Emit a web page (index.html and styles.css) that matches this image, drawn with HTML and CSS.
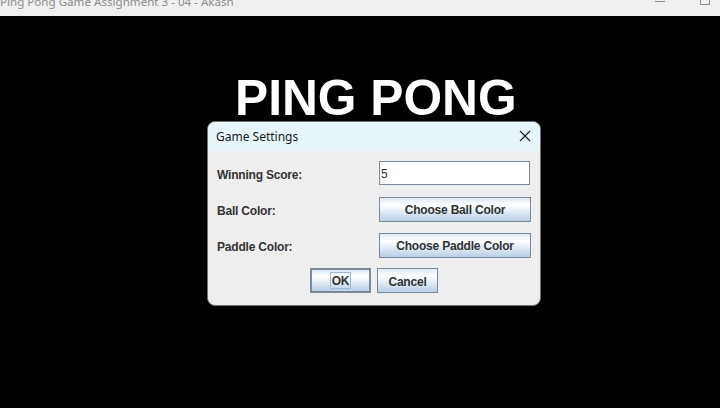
FILE: index.html
```html
<!DOCTYPE html>
<html>
<head>
<meta charset="utf-8">
<title>Ping Pong</title>
<link rel="stylesheet" href="styles.css">
</head>
<body>
<div class="titlebar">
  <span class="wintitle">Ping Pong Game Assignment 3 - 04 - Akash</span>
  <span class="ctl-min"></span>
  <span class="ctl-max"></span>
</div>
<main class="canvas">
  <h1 class="logo">PING PONG</h1>
  <section class="dialog">
    <header class="dlg-head">
      <span class="dlg-title">Game Settings</span>
      <svg class="dlg-close" width="12" height="12" viewBox="0 0 12 12"><path d="M1 1 L11 11 M11 1 L1 11" stroke="#1a1a1a" stroke-width="1.1" fill="none"/></svg>
    </header>
    <div class="dlg-body">
      <div class="form">
        <label class="lbl">Winning Score:</label>
        <div class="field">5</div>
        <label class="lbl">Ball Color:</label>
        <button class="btn">Choose Ball Color</button>
        <label class="lbl">Paddle Color:</label>
        <button class="btn">Choose Paddle Color</button>
      </div>
      <div class="actions">
        <button class="btn btn-small btn-default"><span class="focus">OK</span></button>
        <button class="btn btn-small">Cancel</button>
      </div>
    </div>
  </section>
</main>
</body>
</html>
```

FILE: styles.css
```css
html, body {
  margin: 0;
  padding: 0;
  width: 720px;
  height: 408px;
  overflow: hidden;
  background: #000;
}

.titlebar {
  height: 16px;
  background: #f0f0f0;
  display: flex;
  align-items: flex-start;
  overflow: hidden;
}

.wintitle {
  font-family: "Noto Sans", "Open Sans", sans-serif;
  font-size: 11.6px;
  line-height: 16px;
  color: #8c8c8c;
  margin-top: -6px;
  white-space: nowrap;
  flex: 1;
}

.ctl-min {
  width: 10px;
  height: 1px;
  background: #8a8a8a;
  margin-top: 1px;
}

.ctl-max {
  width: 8px;
  height: 8px;
  border: 1px solid #8a8a8a;
  margin-top: -5px;
  margin-left: 35px;
  margin-right: 10px;
}

.canvas {
  position: relative;
  height: 392px;
  background: #000;
}

.logo {
  margin: 0;
  padding: 57px 0 0 235px;
  font-family: "Liberation Sans", Arial, sans-serif;
  font-weight: bold;
  font-size: 49.7px;
  line-height: 50px;
  color: #fff;
}

.dialog {
  position: absolute;
  left: 207px;
  top: 105px;
  width: 334px;
  height: 185px;
  box-sizing: border-box;
  border: 1px solid #707070;
  border-radius: 8px;
  overflow: hidden;
  background: #eeeeee;
  display: flex;
  flex-direction: column;
}

.dlg-head {
  height: 29px;
  background: #e6f5f8;
  display: flex;
  align-items: center;
  padding-left: 8px;
  padding-right: 9px;
}

.dlg-title {
  flex: 1;
  font-family: "Noto Sans", "Open Sans", sans-serif;
  font-size: 12px;
  color: #1a1a1a;
  margin-top: -1px;
}

.dlg-close {
  display: block;
  margin-top: -1px;
}

.dlg-body {
  flex: 1;
  padding: 10px 9px 0 9px;
}

.form {
  display: grid;
  grid-template-columns: 162px 152px;
  grid-template-rows: 25px 25px 25px;
  row-gap: 11px;
}

.lbl {
  font-family: "Liberation Sans", Arial, sans-serif;
  font-weight: bold;
  font-size: 12px;
  letter-spacing: -0.2px;
  color: #333333;
  align-self: center;
  padding-top: 2px;
}

.field {
  height: 24px;
  box-sizing: border-box;
  width: 151px;
  border: 1px solid #7a8a99;
  background: #fff;
  font-family: "Liberation Sans", Arial, sans-serif;
  font-size: 12px;
  color: #333333;
  line-height: 24px;
  padding-left: 1px;
}

.btn {
  margin: 0;
  height: 25px;
  box-sizing: border-box;
  border: 1px solid #7a8a99;
  border-radius: 0;
  background: linear-gradient(to bottom, #dde8f3 0%, #ffffff 30%, #b8cfe5 100%);
  font-family: "Liberation Sans", Arial, sans-serif;
  font-weight: bold;
  font-size: 12px;
  letter-spacing: -0.2px;
  color: #333333;
  padding: 1px 0 0 0;
  display: flex;
  align-items: center;
  justify-content: center;
}

.actions {
  display: flex;
  justify-content: center;
  gap: 6px;
  margin-top: 10px;
}

.btn-small {
  width: 61px;
  padding-top: 2px;
}

.btn-default {
  border: 2px solid #7a8a99;
  padding: 0;
}

.focus {
  display: flex;
  align-items: center;
  justify-content: center;
  height: 17px;
  box-sizing: border-box;
  padding: 1px 1px 0 1px;
  border: 1px solid #a3b8cc;
}
```
